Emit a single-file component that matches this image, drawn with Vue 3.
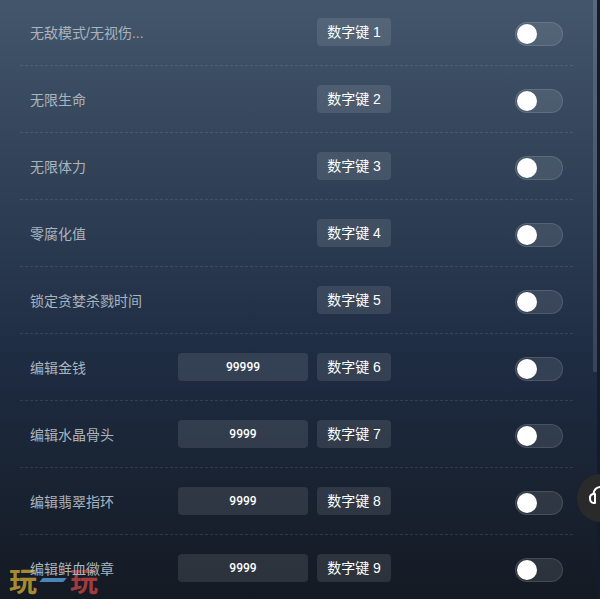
<template>
  <div class="panel">
    <div class="logo">
      <span class="logo-a">玩</span>
      <span class="logo-dash"></span>
      <span class="logo-b">玩</span>
    </div>

    <div class="list">
      <div v-for="item in items" :key="item.key" class="row">
        <div class="name">{{ item.name }}</div>
        <div class="value-slot">
          <div v-if="item.value" class="value">{{ item.value }}</div>
        </div>
        <div class="key">数字键 {{ item.key }}</div>
        <div class="switch"><span class="knob"></span></div>
      </div>
    </div>

    <div class="edge"></div>
    <div class="thumb"></div>

    <div class="float-btn">
      <svg class="float-icon" width="24" height="24" viewBox="0 0 24 24" fill="none" stroke="#fff" stroke-width="2" stroke-linecap="round" stroke-linejoin="round">
        <path d="M4.5 8C5 4 7.500 1 12 1s7 3 7.500 7" />
        <path d="M6 8v9H4.500A3.500 4.500 0 0 1 1 12.500 4 4 0 0 1 4 8z" />
        <path d="M18 8v9h1.500a3.500 4.500 0 0 0 3.500-4.500A4 4 0 0 0 20 8z" />
      </svg>
    </div>
  </div>
</template>

<script setup>
const items = [
  { key: 1, name: '无敌模式/无视伤...' },
  { key: 2, name: '无限生命' },
  { key: 3, name: '无限体力' },
  { key: 4, name: '零腐化值' },
  { key: 5, name: '锁定贪婪杀戮时间' },
  { key: 6, name: '编辑金钱', value: '99999' },
  { key: 7, name: '编辑水晶骨头', value: '9999' },
  { key: 8, name: '编辑翡翠指环', value: '9999' },
  { key: 9, name: '编辑鲜血徽章', value: '9999' }
]
</script>

<style>
html, body {
  margin: 0;
  overflow: hidden;
  background: #141a24;
}
</style>

<style scoped>
.panel {
  position: relative;
  width: 600px;
  height: 599px;
  overflow: hidden;
  background: linear-gradient(to bottom, #43566b 0%, #1e2c42 60%, #141a23 100%);
  font-family: "Liberation Sans", "Noto Sans CJK SC", sans-serif;
}

.list {
  position: relative;
  margin-top: -1px;
  padding: 0 27px 0 20px;
}

.row {
  display: flex;
  align-items: center;
  height: 66px;
  border-bottom: 1px dashed rgba(255, 255, 255, 0.1);
}

.name {
  width: 118px;
  margin-left: 10px;
  font-size: 14px;
  color: #a9b4bf;
  white-space: nowrap;
}

.value-slot {
  width: 130px;
  margin-left: 30px;
}

.value {
  height: 28px;
  line-height: 28px;
  border-radius: 4px;
  background: rgba(255, 255, 255, 0.1);
  color: #fff;
  font-family: Roboto, "Liberation Sans", sans-serif;
  font-size: 12px;
  font-weight: 500;
  text-align: center;
}

.key {
  width: 74px;
  height: 28px;
  line-height: 29px;
  margin-left: 9px;
  border-radius: 4px;
  background: rgba(255, 255, 255, 0.1);
  color: #fff;
  font-size: 14px;
  text-align: center;
}

.switch {
  box-sizing: border-box;
  width: 48px;
  height: 24px;
  margin: 4px 0 0 124px;
  padding: 1px;
  border: 1px solid rgba(255, 255, 255, 0.12);
  border-radius: 12px;
  background: rgba(255, 255, 255, 0.1);
}

.knob {
  display: block;
  width: 20px;
  height: 20px;
  border-radius: 50%;
  background: #fff;
}

.edge {
  position: absolute;
  top: 0;
  right: 0;
  width: 3px;
  height: 100%;
  background: #121c2b;
}

.thumb {
  position: absolute;
  top: 0;
  left: 593px;
  width: 4px;
  height: 372px;
  background: rgba(255, 255, 255, 0.12);
}

.float-btn {
  position: absolute;
  left: 577px;
  top: 474px;
  width: 48px;
  height: 48px;
  border-radius: 50%;
  background: #2b2a2b;
  display: flex;
  align-items: center;
  justify-content: center;
}

.logo {
  position: absolute;
  left: 9px;
  top: 566px;
  width: 92px;
  height: 28px;
  display: flex;
  align-items: center;
}

.logo-a,
.logo-b {
  font-family: "Noto Sans CJK SC", sans-serif;
  font-size: 28px;
  font-weight: 700;
  line-height: 28px;
}

.logo-a {
  color: #a88a2e;
}

.logo-b {
  color: #a33a3c;
}

.logo-dash {
  width: 24px;
  height: 4px;
  margin: 0 5px 0 4px;
  background: #4a86b8;
  transform: skewX(-40deg);
}
</style>
